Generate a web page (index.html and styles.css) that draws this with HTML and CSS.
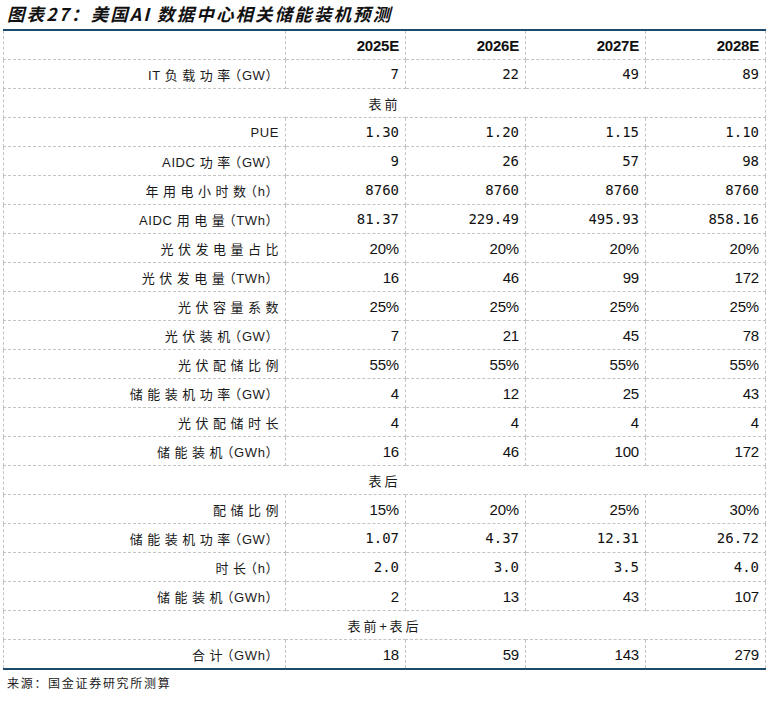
FILE: index.html
```html
<!DOCTYPE html>
<html lang="zh">
<head>
<meta charset="utf-8">
<link rel="stylesheet" href="styles.css">
</head>
<body>
<div class="page">
  <div class="title">图表27：美国AI 数据中心相关储能装机预测</div>
  <table class="data">
    <colgroup><col class="c-label"><col class="c-num"><col class="c-num"><col class="c-num"><col class="c-num"></colgroup>
    <tr class="head"><td></td><td>2025E</td><td>2026E</td><td>2027E</td><td>2028E</td></tr>
    <tr><td class="lab"><span class="en">IT </span>负载功率<span class="en">（GW</span>）</td><td class="m">7</td><td class="m">22</td><td class="m">49</td><td class="m">89</td></tr>
    <tr><td class="sec" colspan="5">表前</td></tr>
    <tr><td class="lab"><span class="en">PU</span>E</td><td class="m">1.30</td><td class="m">1.20</td><td class="m">1.15</td><td class="m">1.10</td></tr>
    <tr><td class="lab"><span class="en">AIDC </span>功率<span class="en">（GW</span>）</td><td class="m">9</td><td class="m">26</td><td class="m">57</td><td class="m">98</td></tr>
    <tr><td class="lab">年用电小时数<span class="en">（h</span>）</td><td class="m">8760</td><td class="m">8760</td><td class="m">8760</td><td class="m">8760</td></tr>
    <tr><td class="lab"><span class="en">AIDC </span>用电量<span class="en">（TWh</span>）</td><td class="m">81.37</td><td class="m">229.49</td><td class="m">495.93</td><td class="m">858.16</td></tr>
    <tr><td class="lab">光伏发电量占比</td><td class="a">20%</td><td class="a">20%</td><td class="a">20%</td><td class="a">20%</td></tr>
    <tr><td class="lab">光伏发电量<span class="en">（TWh</span>）</td><td class="a">16</td><td class="a">46</td><td class="a">99</td><td class="a">172</td></tr>
    <tr><td class="lab">光伏容量系数</td><td class="a">25%</td><td class="a">25%</td><td class="a">25%</td><td class="a">25%</td></tr>
    <tr><td class="lab">光伏装机<span class="en">（GW</span>）</td><td class="a">7</td><td class="a">21</td><td class="a">45</td><td class="a">78</td></tr>
    <tr><td class="lab">光伏配储比例</td><td class="a">55%</td><td class="a">55%</td><td class="a">55%</td><td class="a">55%</td></tr>
    <tr><td class="lab">储能装机功率<span class="en">（GW</span>）</td><td class="a">4</td><td class="a">12</td><td class="a">25</td><td class="a">43</td></tr>
    <tr><td class="lab">光伏配储时长</td><td class="a">4</td><td class="a">4</td><td class="a">4</td><td class="a">4</td></tr>
    <tr><td class="lab">储能装机<span class="en">（GWh</span>）</td><td class="a">16</td><td class="a">46</td><td class="a">100</td><td class="a">172</td></tr>
    <tr><td class="sec" colspan="5">表后</td></tr>
    <tr><td class="lab">配储比例</td><td class="a">15%</td><td class="a">20%</td><td class="a">25%</td><td class="a">30%</td></tr>
    <tr><td class="lab">储能装机功率<span class="en">（GW</span>）</td><td class="m">1.07</td><td class="m">4.37</td><td class="m">12.31</td><td class="m">26.72</td></tr>
    <tr><td class="lab">时长<span class="en">（h</span>）</td><td class="m">2.0</td><td class="m">3.0</td><td class="m">3.5</td><td class="m">4.0</td></tr>
    <tr><td class="lab">储能装机<span class="en">（GWh</span>）</td><td class="a">2</td><td class="a">13</td><td class="a">43</td><td class="a">107</td></tr>
    <tr><td class="sec" colspan="5">表前+表后</td></tr>
    <tr><td class="lab">合计<span class="en">（GWh</span>）</td><td class="a">18</td><td class="a">59</td><td class="a">143</td><td class="a">279</td></tr>
  </table>
  <div class="source">来源：国金证券研究所测算</div>
</div>
</body>
</html>
```

FILE: styles.css
```css
html, body {
  margin: 0;
  padding: 0;
  background: #ffffff;
}

body {
  font-family: "Liberation Sans", "Noto Sans CJK SC", sans-serif;
  color: #111111;
}

.page {
  width: 762px;
  padding-left: 3px;
}

.title {
  height: 29px;
  line-height: 28px;
  padding-left: 4px;
  font-family: "Noto Sans CJK SC", sans-serif;
  font-size: 17.5px;
  font-weight: 700;
  font-style: italic;
  letter-spacing: 2.1px;
  color: #111111;
  white-space: nowrap;
}

.data {
  width: 762px;
  table-layout: fixed;
  border-collapse: collapse;
  border-top: 2px solid #1d4a6a;
  border-bottom: 2px solid #1d4a6a;
}

.c-label { width: 282px; }
.c-num { width: 120px; }

.data td {
  height: 28px;
  padding: 0 6px 0 0;
  border: 1px dashed #c4c4c4;
  text-align: right;
  vertical-align: middle;
  white-space: nowrap;
  color: #111111;
}

.data tr.head td {
  font-family: "Liberation Sans", sans-serif;
  font-weight: 700;
  font-size: 15px;
  letter-spacing: -0.2px;
}

.data td.lab {
  padding-right: 2px;
  font-family: "Liberation Sans", "Noto Sans CJK SC", sans-serif;
  font-size: 13px;
  letter-spacing: 4.5px;
  color: #1a1a1a;
}

.data td.lab .en {
  letter-spacing: 0.6px;
  font-feature-settings: "halt";
}

.data td.sec {
  text-align: center;
  padding: 0;
  font-family: "Noto Sans CJK SC", sans-serif;
  font-size: 13px;
  letter-spacing: 3px;
  color: #1a1a1a;
}

.data td.m {
  font-family: "DejaVu Sans Mono", monospace;
  font-size: 14px;
  letter-spacing: 0;
}

.data td.a {
  font-family: "Liberation Sans", sans-serif;
  font-size: 15px;
  letter-spacing: -0.2px;
}

.source {
  margin-top: 4px;
  padding-left: 4px;
  font-family: "Noto Sans CJK SC", sans-serif;
  font-size: 12px;
  line-height: 18px;
  letter-spacing: 1.7px;
  color: #222222;
}
```
